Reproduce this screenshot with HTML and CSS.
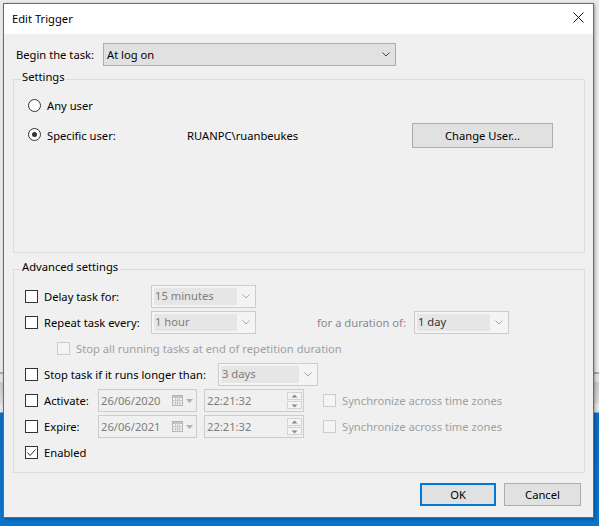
FILE: index.html
```html
<!DOCTYPE html>
<html>
<head>
<meta charset="utf-8">
<title>Edit Trigger</title>
<link rel="stylesheet" href="styles.css">
</head>
<body>
<div class="window">
  <div class="titlebar">
    <span class="title">Edit Trigger</span>
    <span class="close"><svg width="11" height="11" viewBox="0 0 11 11"><path d="M0.5 0.5L10.5 10.5M10.5 0.5L0.5 10.5" stroke="#111" stroke-width="1" fill="none"/></svg></span>
  </div>
  <div class="content">
    <div class="begin-row">
      <span class="begin-label">Begin the task:</span>
      <div class="combo-main">
        <span>At log on</span>
        <svg class="chev" width="8" height="5" viewBox="0 0 8 5"><polyline points="0.5,0.5 4,4 7.5,0.5" fill="none" stroke="#444" stroke-width="1"/></svg>
      </div>
    </div>

    <fieldset class="group settings">
      <legend>Settings</legend>
      <div class="radio-row first">
        <span class="radio"></span><span>Any user</span>
      </div>
      <div class="radio-row second">
        <span class="radio checked"></span>
        <span class="user-label">Specific user:</span>
        <span class="user-name">RUANPC\ruanbeukes</span>
        <button class="btn change">Change User...</button>
      </div>
    </fieldset>

    <fieldset class="group advanced">
      <legend>Advanced settings</legend>
      <div class="rows">
        <div class="row">
          <span class="check"></span><span class="lbl w-delay">Delay task for:</span>
          <div class="combo w105"><span class="edit">15 minutes</span><span class="arrow"><svg width="8" height="5" viewBox="0 0 8 5"><polyline points="0.5,0.5 4,4 7.5,0.5" fill="none" stroke="#a8a8a8" stroke-width="1"/></svg></span></div>
        </div>
        <div class="row">
          <span class="check"></span><span class="lbl w-delay">Repeat task every:</span>
          <div class="combo w105"><span class="edit">1 hour</span><span class="arrow"><svg width="8" height="5" viewBox="0 0 8 5"><polyline points="0.5,0.5 4,4 7.5,0.5" fill="none" stroke="#a8a8a8" stroke-width="1"/></svg></span></div>
          <span class="lbl duration">for a duration of:</span>
          <div class="combo w95"><span class="edit dark">1 day</span><span class="arrow"><svg width="8" height="5" viewBox="0 0 8 5"><polyline points="0.5,0.5 4,4 7.5,0.5" fill="none" stroke="#a8a8a8" stroke-width="1"/></svg></span></div>
        </div>
        <div class="row sub">
          <span class="check dis"></span><span class="lbl faint">Stop all running tasks at end of repetition duration</span>
        </div>
        <div class="row">
          <span class="check"></span><span class="lbl w-stop">Stop task if it runs longer than:</span>
          <div class="combo w100"><span class="edit">3 days</span><span class="arrow"><svg width="8" height="5" viewBox="0 0 8 5"><polyline points="0.5,0.5 4,4 7.5,0.5" fill="none" stroke="#a8a8a8" stroke-width="1"/></svg></span></div>
        </div>
        <div class="row">
          <span class="check"></span><span class="lbl w-date">Activate:</span>
          <div class="date">
            <span class="val">26/06/2020</span>
            <svg class="cal" width="11" height="11" viewBox="0 0 11 11"><rect x="0.5" y="0.5" width="10" height="10" fill="#f4f4f4" stroke="#b4b4b4"/><rect x="1" y="1" width="9" height="2" fill="#c4c4c4"/><path d="M0.5 5.5H10.5M0.5 8H10.5M3.5 3V10.5M5.5 3V10.5M7.5 3V10.5" stroke="#c8c8c8" stroke-width="1" fill="none"/></svg>
            <svg class="tri" width="7" height="4" viewBox="0 0 7 4"><polygon points="0,0 7,0 3.5,4" fill="#b0b0b0"/></svg>
          </div>
          <div class="time">
            <span class="val">22:21:32</span>
            <div class="spin">
              <span class="sb"><svg width="7" height="5" viewBox="0 0 7 5"><polygon points="3.5,0.5 6.5,3.5 0.5,3.5" fill="#8a8a8a"/></svg></span>
              <span class="sb"><svg width="7" height="5" viewBox="0 0 7 5"><polygon points="0.5,1.5 6.5,1.5 3.5,4.5" fill="#8a8a8a"/></svg></span>
            </div>
          </div>
          <span class="check dis sync"></span><span class="lbl faint">Synchronize across time zones</span>
        </div>
        <div class="row">
          <span class="check"></span><span class="lbl w-date">Expire:</span>
          <div class="date">
            <span class="val">26/06/2021</span>
            <svg class="cal" width="11" height="11" viewBox="0 0 11 11"><rect x="0.5" y="0.5" width="10" height="10" fill="#f4f4f4" stroke="#b4b4b4"/><rect x="1" y="1" width="9" height="2" fill="#c4c4c4"/><path d="M0.5 5.5H10.5M0.5 8H10.5M3.5 3V10.5M5.5 3V10.5M7.5 3V10.5" stroke="#c8c8c8" stroke-width="1" fill="none"/></svg>
            <svg class="tri" width="7" height="4" viewBox="0 0 7 4"><polygon points="0,0 7,0 3.5,4" fill="#b0b0b0"/></svg>
          </div>
          <div class="time">
            <span class="val">22:21:32</span>
            <div class="spin">
              <span class="sb"><svg width="7" height="5" viewBox="0 0 7 5"><polygon points="3.5,0.5 6.5,3.5 0.5,3.5" fill="#8a8a8a"/></svg></span>
              <span class="sb"><svg width="7" height="5" viewBox="0 0 7 5"><polygon points="0.5,1.5 6.5,1.5 3.5,4.5" fill="#8a8a8a"/></svg></span>
            </div>
          </div>
          <span class="check dis sync"></span><span class="lbl faint">Synchronize across time zones</span>
        </div>
        <div class="row">
          <span class="check"><svg width="11" height="11" viewBox="0 0 11 11"><polyline points="1.5,5.5 4,8.5 9.5,2.5" fill="none" stroke="#333" stroke-width="1"/></svg></span><span class="lbl">Enabled</span>
        </div>
      </div>
    </fieldset>

    <div class="footer">
      <button class="btn ok">OK</button>
      <button class="btn cancel">Cancel</button>
    </div>
  </div>
</div>
</body>
</html>
```

FILE: styles.css
```css
html, body {
  margin: 0;
  padding: 0;
}
body {
  width: 599px;
  height: 526px;
  overflow: hidden;
  font-family: "Noto Sans", "Open Sans", sans-serif;
  font-size: 11.2px;
  color: #000;
  background: linear-gradient(to bottom, #ebebeb 0, #ebebeb 372px, #a9a9a9 372px, #a9a9a9 374px, #e2e2e2 374px, #e2e2e2 382px, #c9c9c9 382px, #d9d9d9 403px, #e6e6e6 404px, #e6e6e6 412px, #0d6cc0 413px, #0a74cc 526px);
}

.window {
  margin: 3px 0 0 3px;
  width: 591px;
  height: 515px;
  box-sizing: border-box;
  border: 1px solid #6b6b6b;
  background: #f0f0f0;
  box-shadow: 1px 1px 3px rgba(0, 0, 0, 0.35);
  display: flex;
  flex-direction: column;
}

.titlebar {
  height: 30px;
  flex: none;
  background: #fff;
  display: flex;
  align-items: center;
  justify-content: space-between;
  padding: 0 9px 0 8px;
}
.title {
  line-height: 16px;
}
.close {
  display: flex;
  margin-bottom: 3px;
}

.content {
  flex: 1;
  padding: 9px 8px 0 9px;
  display: flex;
  flex-direction: column;
}

.begin-row {
  display: flex;
  align-items: center;
  height: 23px;
  margin-left: 3px;
}
.begin-label {
  width: 87px;
}
.combo-main {
  width: 293px;
  height: 23px;
  box-sizing: border-box;
  background: #e1e1e1;
  border: 1px solid #adadad;
  display: flex;
  align-items: center;
  padding-left: 3px;
}
.combo-main .chev {
  margin-left: auto;
  margin-right: 5px;
}

.group {
  margin: 0;
  padding: 0;
  min-width: 0;
  border: 1px solid #dcdcdc;
}
.group legend {
  padding: 0 1px 4px 1px;
  margin-left: 7px;
  line-height: 16px;
}
.settings {
  margin-top: 3px;
  padding-bottom: 104px;
}
.radio-row {
  display: flex;
  align-items: center;
  padding-left: 14px;
}
.radio-row.first {
  height: 18px;
  margin-top: 7px;
}
.radio-row.second {
  height: 25px;
  margin-top: 9px;
}
.radio {
  width: 13px;
  height: 13px;
  box-sizing: border-box;
  border: 1px solid #333;
  border-radius: 50%;
  background: #fff;
  margin-right: 6px;
  display: flex;
  align-items: center;
  justify-content: center;
}
.radio.checked::after {
  content: "";
  width: 5px;
  height: 5px;
  border-radius: 50%;
  background: #333;
}
.radio-row.second .radio {
  margin-top: -3px;
}
.user-label {
  width: 140px;
}
.user-name {
  width: 225px;
}

.btn {
  font-family: "Noto Sans", "Open Sans", sans-serif;
  font-size: 11.2px;
  color: #000;
  background: #e1e1e1;
  border: 1px solid #adadad;
  padding: 0;
  margin: 0;
  box-sizing: border-box;
}
.change {
  width: 141px;
  height: 25px;
}

.advanced {
  margin-top: 6px;
  padding-bottom: 8px;
}
.rows {
  display: flex;
  flex-direction: column;
  gap: 3px;
  padding-top: 6px;
}
.row {
  height: 23px;
  display: flex;
  align-items: center;
  padding-left: 11px;
}
.row.sub {
  padding-left: 43px;
}
.check {
  width: 13px;
  height: 13px;
  flex: none;
  box-sizing: border-box;
  border: 1px solid #333;
  background: #fff;
  margin-right: 6px;
  display: flex;
  align-items: center;
  justify-content: center;
}
.check.dis {
  border-color: #cccccc;
  background: #f4f4f4;
}
.check.sync {
  margin-left: 19px;
}
.lbl {
  white-space: nowrap;
}
.w-delay { width: 107px; }
.w-stop { width: 174px; }
.w-date { width: 54px; }
.duration {
  margin-left: 61px;
  width: 97px;
  color: #8a8a8a;
}
.faint {
  color: #a0a0a0;
}

.combo {
  height: 23px;
  box-sizing: border-box;
  border: 1px solid #cccccc;
  background: #f4f4f4;
  display: flex;
  align-items: stretch;
  padding: 2px 0 2px 2px;
}
.w105 { width: 105px; }
.w95 { width: 95px; }
.w100 { width: 100px; }
.combo .edit {
  flex: 1;
  background: #e6e6e6;
  color: #7d7d7d;
  line-height: 16px;
  padding-left: 1px;
}
.combo .edit.dark {
  color: #333;
}
.combo .arrow {
  width: 18px;
  display: flex;
  align-items: center;
  justify-content: center;
}

.date, .time {
  height: 23px;
  box-sizing: border-box;
  border: 1px solid #cccccc;
  background: #f0f0f0;
  display: flex;
  align-items: center;
  color: #7d7d7d;
}
.date {
  width: 99px;
  padding-left: 2px;
}
.date .val {
  width: 71px;
}
.date .tri {
  margin-left: 3px;
}
.time {
  width: 100px;
  margin-left: 7px;
  padding-left: 2px;
  padding-right: 1px;
}
.time .val {
  flex: 1;
}
.spin {
  display: flex;
  flex-direction: column;
  gap: 1px;
}
.sb {
  width: 15px;
  height: 8px;
  box-sizing: border-box;
  border: 1px solid #d4d4d4;
  background: #f4f4f4;
  display: flex;
  align-items: center;
  justify-content: center;
}

.footer {
  margin-top: 10px;
  margin-right: 4px;
  display: flex;
  justify-content: flex-end;
  gap: 8px;
}
.ok {
  width: 76px;
  height: 23px;
  border: 2px solid #0078d7;
}
.cancel {
  width: 77px;
  height: 23px;
}
```
